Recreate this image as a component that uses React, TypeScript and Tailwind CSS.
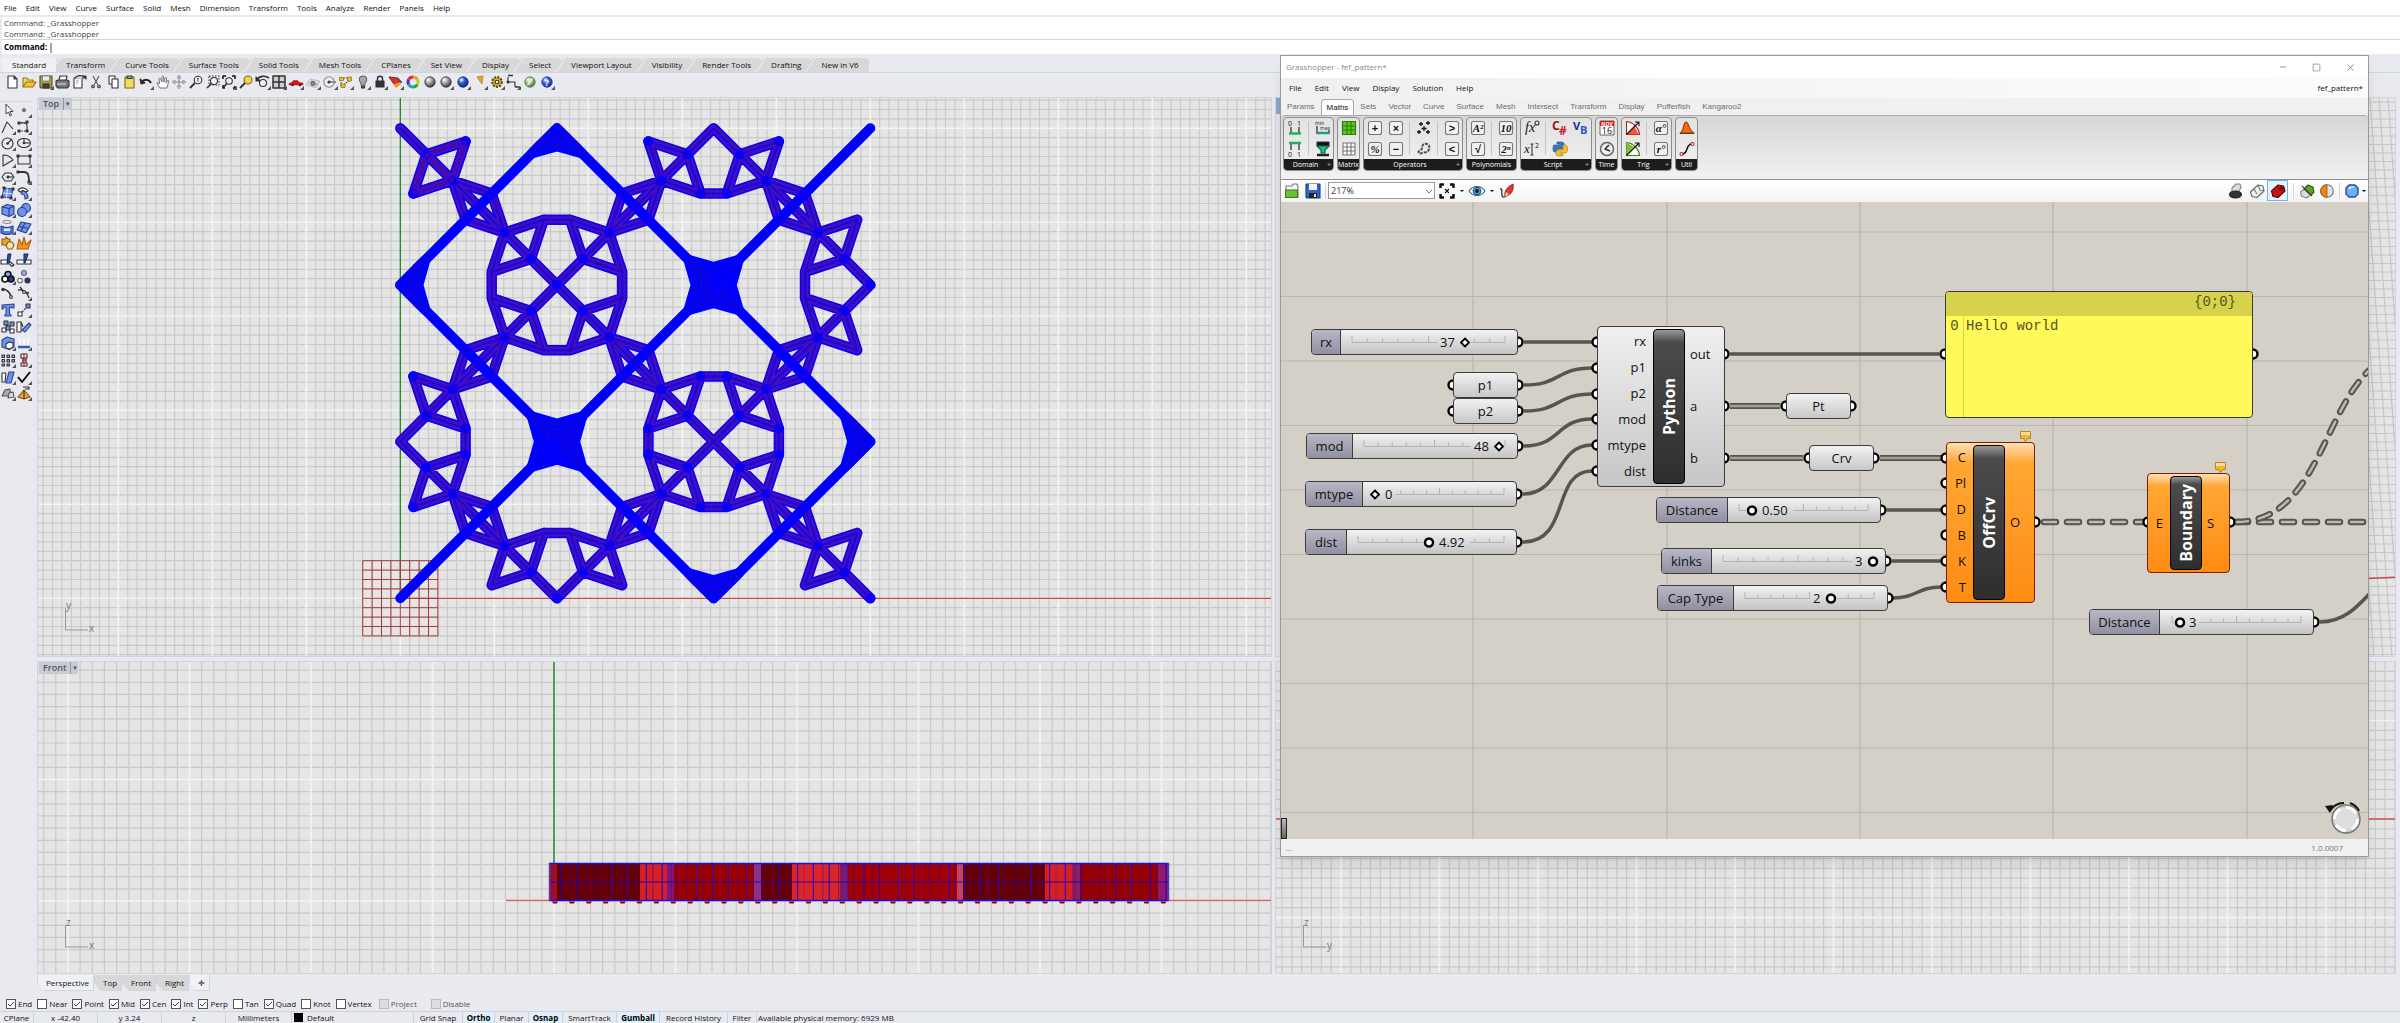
import type { ReactNode } from "react";
import { Minus, Square, X } from "lucide-react";

const INK = "#333";
const BLUE = "#6f92ea";

const menu = ["File", "Edit", "View", "Curve", "Surface", "Solid", "Mesh", "Dimension", "Transform", "Tools", "Analyze", "Render", "Panels", "Help"];
const toolTabs = ["Standard", "Transform", "Curve Tools", "Surface Tools", "Solid Tools", "Mesh Tools", "CPlanes", "Set View", "Display", "Select", "Viewport Layout", "Visibility", "Render Tools", "Drafting", "New in V6"];
const ghMenu = ["File", "Edit", "View", "Display", "Solution", "Help"];
const ghTabs = ["Params", "Maths", "Sets", "Vector", "Curve", "Surface", "Mesh", "Intersect", "Transform", "Display", "Pufferfish", "Kangaroo2"];

function Svg({ children, more }: { children: ReactNode; more?: boolean }) {
  return (
    <svg viewBox="0 0 16 16" className="size-4 shrink-0 overflow-visible" fill="none" stroke={INK} strokeWidth="1.1" strokeLinejoin="round" aria-hidden="true">
      {children}
      {more && <path d="M16 12v4h-4z" fill="#555" stroke="none" />}
    </svg>
  );
}

function Ball({ id, light, dark }: { id: string; light: string; dark: string }) {
  return (
    <>
      <radialGradient id={id} cx=".35" cy=".3" r=".75">
        <stop offset="0" stopColor="#fff" />
        <stop offset=".4" stopColor={light} />
        <stop offset="1" stopColor={dark} />
      </radialGradient>
      <circle cx="8" cy="8" r="5.2" fill={`url(#${id})`} stroke={dark} strokeWidth=".8" />
    </>
  );
}

const topIcons: { name: string; more?: boolean; art: ReactNode }[] = [
  { name: "New", art: <path d="M4 2h6l3 3v9H4zM10 2v3h3" fill="#fff" /> },
  { name: "Open", art: <><path d="M2 13V4h4l1 2h5v2" fill="#f7d96b" stroke="#9a7412" /><path d="M2 13l3-5h10l-3 5z" fill="#f2c12e" stroke="#9a7412" /></> },
  { name: "Save", more: true, art: <><path d="M2 2h12v12H3l-1-1z" fill="#a99f3b" stroke="#55501c" /><path d="M4.5 2h7v5h-7z" fill="#e9ecee" stroke="#666" strokeWidth=".6" /><path d="M5 10h6v4H5z" fill="#444" /></> },
  { name: "Print", art: <><path d="M5 6l1-4h7l-1 4" fill="#fff" /><path d="M2 7l2-1h9l2 1v5l-2 2H4l-2-2z" fill="#777" /><path d="M3 10h9" stroke="#ddd" /></> },
  { name: "Document properties", art: <><path d="M3 4h8v10H3z" fill="#fff" /><path d="M4 4c1-2 5-3 8-2v3" fill="#ddd" /><path d="M12 2h3v3z" fill={INK} /><path d="M5 7h3M5 9h2" stroke="#999" /></> },
  { name: "Cut", art: <><path d="M5 2l5 9M11 2L6 11" stroke="#555" /><circle cx="5" cy="12.5" r="1.3" /><circle cx="11" cy="12.5" r="1.3" /></> },
  { name: "Copy", art: <><path d="M4 2h6v8H4z" fill="#fff" /><path d="M7 5h6v9H7z" fill="#fff" /></> },
  { name: "Paste", art: <><path d="M4 3h9v11H4z" fill="#f3dc62" stroke="#7c6a1c" /><path d="M6 2h5v2.5H6z" fill="#aaa" /></> },
  { name: "Undo", more: true, art: <><path d="M4 8c2-3 7-3 9 1" strokeWidth="2" stroke="#222" /><path d="M2 5l1 5 4-1z" fill="#222" /></> },
  { name: "Pan", art: <path d="M5 14c-1-2-3-4-3-5s1.5-.5 2.5 1L4 5c0-1 1.500-1 1.800 0L7 8V3c0-1 1.500-1 1.600 0L9 8l1-4c.3-1 1.600-.8 1.500.3L11 9l1.500-2.500c.7-.6 1.500 0 1.200.7L12 14z" fill="#fff" stroke="#666" strokeWidth=".9" /> },
  { name: "Rotate view", art: <><path d="M8 2v12M2 8h12" stroke="#888" /><path d="M8 1l2 3H6zM8 15l2-3H6zM1 8l3-2v4zM15 8l-3-2v4z" fill="#ccc" stroke="#777" strokeWidth=".6" /></> },
  { name: "Zoom", art: <><circle cx="10" cy="6" r="3.8" fill="#f5f5f5" /><path d="M7 9l-5 5" strokeWidth="1.8" /><path d="M10 4v4M9 5l1-1 1 1" strokeWidth=".8" /></> },
  { name: "Zoom window", art: <><circle cx="9" cy="7" r="3.5" fill="#f5f5f5" /><path d="M6.5 9.5L2 14" strokeWidth="1.6" /><path d="M4 2h10v9H4z" strokeDasharray="1.5 1.5" /></> },
  { name: "Zoom extents", more: true, art: <><circle cx="8" cy="7" r="3.3" fill="#f5f5f5" /><path d="M6 9l-3 4" strokeWidth="1.6" /><path d="M2 5V2h3M11 2h3v3M2 11v3h2M12 14h2v-2" stroke="#111" strokeWidth="1.5" /></> },
  { name: "Zoom selected", art: <><circle cx="10" cy="6" r="4" fill="#f3d443" stroke="#7a6a22" /><path d="M7 9l-5 5" strokeWidth="1.8" /></> },
  { name: "Undo view", more: true, art: <><circle cx="8" cy="9" r="3.5" fill="#f5f5f5" /><path d="M2 6c2-4 8-5 12-2" strokeWidth="1.6" /><path d="M1 3v4h4z" fill={INK} /></> },
  { name: "Four viewports", more: true, art: <path d="M2 2h12v12H2zM8 2v12M2 8h12" fill="#cfcfcf" strokeWidth="1.5" /> },
  { name: "Named views", more: true, art: <><path d="M1 9.5l2.500-1L5.500 6.500h4l2 2 3.500.5v2H1z" fill="#d4191c" stroke="#b01013" strokeWidth=".5" /><circle cx="4.5" cy="11" r="1.2" fill="#222" stroke="none" /><circle cx="12" cy="11" r="1.2" fill="#222" stroke="none" /></> },
  { name: "CPlane", more: true, art: <><path d="M1 11l4-6 10 2-4 7z" fill="#ddd" stroke="#aaa" strokeWidth=".6" /><path d="M3 8l10 2.5M6 6l7 6" stroke="#999" strokeWidth=".6" /><circle cx="8" cy="9.5" r="2.2" fill="#888" stroke="#444" strokeWidth=".6" /></> },
  { name: "Object snap", more: true, art: <><circle cx="7" cy="8" r="5.2" stroke="#888" fill="#eee" /><path d="M7 8h7" stroke="#555" /><circle cx="7" cy="8" r="1" fill={INK} /></> },
  { name: "Select points", more: true, art: <><path d="M3 4h8M4 12l8-6M3 12V5" strokeDasharray="1.5 1" /><path d="M1.5 3.5h4v3h-4zM9.5 3h4v4h-4zM3 10h4v3.5H3z" fill="#f0bd27" stroke="#8a6a12" strokeWidth=".7" /></> },
  { name: "Hide", more: true, art: <><path d="M8 2c4 0 5 4 2 7v2H6V9C3 6 4 2 8 2z" fill="#a9a9a9" stroke="#666" /><path d="M6.5 12h3v2h-3z" fill="#555" /></> },
  { name: "Lock", more: true, art: <><path d="M5.5 7V4.5c0-3 5-3 5 0V7" strokeWidth="1.5" /><path d="M4 7h8v6H4z" fill="#333" /></> },
  { name: "Layers", more: true, art: <><path d="M1 3l9 1 4 4-6 5z" fill="#3a6ad2" stroke="#234" strokeWidth=".6" /><path d="M1 3l8 1 3 4-6 2z" fill="#e3301e" stroke="#7b150c" strokeWidth=".6" /><path d="M6 10l6-2 1 2-5 4z" fill="#f19b25" stroke="none" /></> },
  { name: "Properties", art: <g strokeWidth="3"><path d="M8 3a5 5 0 014.300 2.500" stroke="#f0a01c" /><path d="M12.3 5.5a5 5 0 010 5" stroke="#b7cf2c" /><path d="M12.3 10.5A5 5 0 018 13" stroke="#2fa84c" /><path d="M8 13a5 5 0 01-4.300-2.500" stroke="#26a6cf" /><path d="M3.7 10.5a5 5 0 010-5" stroke="#403ac2" /><path d="M3.7 5.5A5 5 0 018 3" stroke="#d52a5a" /></g> },
  { name: "Shade", art: <Ball id="b1" light="#aaa" dark="#333" /> },
  { name: "Rendered", more: true, art: <Ball id="b2" light="#aaa" dark="#333" /> },
  { name: "Render", more: true, art: <Ball id="b3" light="#2f5fd8" dark="#0b2080" /> },
  { name: "Spotlight", more: true, art: <path d="M5 3l6-1-1 8z" fill="#eda32c" stroke="#b77412" strokeWidth=".7" /> },
  { name: "Options", more: true, art: <><circle cx="8" cy="8" r="4.8" fill="#dfae35" stroke="#5f4a16" strokeWidth="2.2" strokeDasharray="2 1.2" /><circle cx="8" cy="8" r="1.8" fill="#eee" /></> },
  { name: "Dimension", more: true, art: <><path d="M3 3v5h7v5" /><path d="M3 1.5h5M10 13h5" strokeWidth="1.5" /><circle cx="3" cy="8" r="1" fill={INK} /></> },
  { name: "Grasshopper", art: <><Ball id="b4" light="#9dbf8c" dark="#4f7a42" /><path d="M5 12c1-5 3-7 6-8-1 4-2 6-6 8z" fill="#dceccf" stroke="none" /></> },
  { name: "Help", more: true, art: <><Ball id="b5" light="#3c62db" dark="#1c3399" /><text x="8" y="11.5" fontSize="9" fontWeight="700" textAnchor="middle" fill="#fff" stroke="none">?</text></> },
];

const sideIcons: { name: string; more?: boolean; art: ReactNode }[] = [
  { name: "Select", art: <path d="M6 2v10l2.500-2 1.500 4 1.500-.7L10 9.500h3z" fill="#fff" strokeWidth=".9" /> },
  { name: "Point", more: true, art: <circle cx="8" cy="8" r="1.3" /> },
  { name: "Polyline", more: true, art: <path d="M2 14L7 3l6 7" /> },
  { name: "Control point curve", more: true, art: <><path d="M3 4c10-1 8 2 8 8" /><path d="M3 4h8v-1M3 12h8" strokeDasharray="1.5 1" /><path d="M2 3h2v2H2zM10 2h2v2h-2zM2 11h2v2H2zM10 11h2v2h-2z" fill="#555" /></> },
  { name: "Circle", more: true, art: <><circle cx="7.5" cy="8.5" r="5.5" /><path d="M7.5 8.5L12 4" /><circle cx="7.5" cy="8.5" r=".8" fill={INK} /></> },
  { name: "Ellipse", more: true, art: <><ellipse cx="8" cy="8" rx="6.5" ry="4.5" /><path d="M8 3.5V8h6" /><circle cx="8" cy="8" r=".8" fill={INK} /></> },
  { name: "Arc", more: true, art: <path d="M3 3v11l10-6C11 5 7 3 3 3z" /> },
  { name: "Rectangle", more: true, art: <><path d="M2 4h12v8H2z" /><path d="M1 3h2v2H1zM13 3h2v2h-2z" fill="#555" /></> },
  { name: "Polygon", more: true, art: <><path d="M5 4h6l3 4-3 4H5L2 8z" /><path d="M8 8h5" /><circle cx="8" cy="8" r="1" fill={INK} /></> },
  { name: "Fillet", more: true, art: <><path d="M2 3h6c4 0 5 3 5 10" strokeWidth="1.8" /><path d="M1 2h2v2H1zM12 12h2v2h-2z" fill="#555" /></> },
  { name: "Surface from points", more: true, art: <><path d="M4 3l9 1-2 9-9-1z" fill={BLUE} stroke="#2b468f" /><path d="M7.5 3.5l-1 9M3 8l9 1" stroke="#dfe6ff" /><path d="M3 2h2v2H3zM12 3h2v2h-2zM10 12h2v2h-2zM1 11h2v2H1z" fill="#444" /></> },
  { name: "Revolve", more: true, art: <><path d="M2 5c3-3 7-3 10 1l-2 1C8 5 6 5 4 7z" fill="#fff" /><path d="M6 6c4 0 6 3 6 7l-3 1c0-4-1-5-4-5z" fill={BLUE} stroke="#2b468f" /></> },
  { name: "Box", more: true, art: <><path d="M2 5l5-2.500L14 4v8l-5 2.500L2 12z" fill={BLUE} stroke="#24408c" /><path d="M2 5l7 1.500L14 4M9 6.500v8" stroke="#24408c" /></> },
  { name: "Union", more: true, art: <><circle cx="10" cy="6" r="4.5" fill={BLUE} stroke="#24408c" /><circle cx="6" cy="10" r="4.5" fill={BLUE} stroke="#24408c" /></> },
  { name: "Extrude", more: true, art: <><ellipse cx="7" cy="3" rx="4" ry="1.5" stroke="#888" /><path d="M1 7c4 2 8 2 12 0v7c-4 2-8 2-12 0z" fill="#4d7be8" stroke="#24408c" /><path d="M4 9c2 .7 4 .7 6 0v3H4z" fill="#e6edff" stroke="none" /></> },
  { name: "Surface grid", more: true, art: <><path d="M5 3l10 2-5 9-9-3z" fill={BLUE} stroke="#24408c" /><path d="M9 4l-4 8M3 7.500l10 2" stroke="#24408c" /></> },
  { name: "Puzzle", art: <><path d="M2 4h3l1-2 2 2h2v4l-2 2H2z" fill="#f0a62a" stroke="#8a5a0c" /><path d="M8 7h4l2 3-2 4H8l-2-3z" fill="#f7e3b8" stroke="#8a5a0c" /></> },
  { name: "Explode", art: <path d="M1 14L3 4l3 6 2-8 2 8 5-5-3 9z" fill="#f39a16" stroke="#bd5a06" /> },
  { name: "Trim", art: <><path d="M1 8h7v4H1zM9 9l5 4-2 1.500-3-3" fill="#fff" /><path d="M8 2h3l-2 9H7z" fill="#2f4fae" stroke="#1c2e6c" /></> },
  { name: "Split", art: <><path d="M1 8h14v4H1z" fill="#fff" /><path d="M8 2h4l-3 9H8z" fill="#2f4fae" stroke="#1c2e6c" /></> },
  { name: "Group", more: true, art: <><circle cx="8" cy="5.5" r="3" fill="#8fa7ef" stroke="#111" strokeWidth="1.6" /><circle cx="5" cy="10" r="3" fill="#fff" stroke="#111" strokeWidth="1.6" /><circle cx="11" cy="10" r="3" fill="#2238a8" stroke="#111" strokeWidth="1.6" /></> },
  { name: "Ungroup", art: <><circle cx="8" cy="4" r="2.5" fill="#a3a9f4" stroke="#667" /><circle cx="4" cy="11.5" r="2.3" fill="#fff" stroke="#667" /><circle cx="11.5" cy="11.5" r="2.5" fill="#1f2fa0" /></> },
  { name: "Edit points", art: <><path d="M2 4c5 0 9 4 9 9" strokeWidth="1.6" /><circle cx="3" cy="4.5" r="1.2" fill={INK} /><circle cx="11" cy="12" r="1.4" fill="#fff" /></> },
  { name: "Control points", more: true, art: <><path d="M2 5c6-1 9 2 11 8M4 2l4 5 5 1" strokeWidth="1.3" /><circle cx="8" cy="7" r="1.4" fill="#fff" /></> },
  { name: "Text", art: <path d="M2 3l12-1v4h-2l-1-1H9.500v7l1.500 1v1H5v-1l1-1V5H4L3 7H2z" fill={BLUE} stroke="#2b468f" /> },
  { name: "Move", more: true, art: <><path d="M2 10h4v4H2z" fill="#fff" /><path d="M10 2h4v4h-4z" fill={BLUE} /><path d="M6 10l4-4" strokeDasharray="2 1" /></> },
  { name: "Copy objects", art: <><path d="M2 9h4v4H2zM10 10h4v4h-4z" fill="#fff" /><path d="M4 2h4v4H4zM10 3h4v4h-4zM6 7h4v4H6z" fill={BLUE} /></> },
  { name: "Rotate", art: <><path d="M1 3h4v10H1zM5 3l2 5" fill="#fff" /><path d="M13 4l2 2-6 7-3-2z" fill={BLUE} stroke="#2b468f" /></> },
  { name: "Check box", more: true, art: <><path d="M2 5l5-3 7 2v8l-5 2.500L2 12z" fill={BLUE} stroke="#2b468f" /><path d="M6 9l3-2 4 1v4l-3 2-4-1z" fill="#fff" /></> },
  { name: "Align", more: true, art: <><path d="M2 12h12" stroke="#3658c4" strokeWidth="2.5" /><path d="M4 3v7M8 3v7M12 3v7" stroke="#fff" strokeWidth="1.5" /></> },
  { name: "Array", more: true, art: <path d="M2 3h2.500v2.500H2zM7 3h2.500v2.500H7zM12 3h2.500v2.500H12zM2 7.500h2.500V10H2zM7 7.500h2.500V10H7zM12 7.500h2.500V10H12zM2 12h2.500v2H2zM7 12h2.500v2H7z" fill="#9fb4f0" /> },
  { name: "Analyze", more: true, art: <><path d="M5 2h6v4H5zM5 11h6v3H5zM7 6h3v5H7z" fill="#eee" /><path d="M8 1v14M6 8h5" stroke="#d4191c" /></> },
  { name: "Shear", more: true, art: <><path d="M2 4h4l-1 9H2z" fill="#fff" /><path d="M9 3h5l-3 11H6z" fill={BLUE} stroke="#2b468f" /></> },
  { name: "Check", more: true, art: <path d="M2 8l4 5 8-10" stroke="#111" strokeWidth="2" /> },
  { name: "Boolean", more: true, art: <><path d="M2 11l3-6 5-1 1 7z" fill="#aaa" stroke="#555" /><path d="M8 13l1-5 4-1 1 5z" fill="#ddd" stroke="#555" /></> },
  { name: "Cone", more: true, art: <><path d="M8 5l6 7-6 2-6-2z" fill="#eca32b" stroke="#7e5210" /><path d="M8 5v9M7 2h6v2H9" fill="#ddd" /></> },
];

// Grid lines through (ox, oy), every tenth line drawn light
function GridLines({ w, h, ox, oy, step }: { w: number; h: number; ox: number; oy: number; step: number }) {
  let minor = "";
  let major = "";
  for (let i = Math.ceil(-ox / step); ox + i * step < w; i++) {
    const seg = `M${(ox + i * step).toFixed(1)} 0V${h}`;
    if (i % 10 === 0) major += seg;
    else minor += seg;
  }
  for (let i = Math.ceil(-oy / step); oy + i * step < h; i++) {
    const seg = `M0 ${(oy + i * step).toFixed(1)}H${w}`;
    if (i % 10 === 0) major += seg;
    else minor += seg;
  }
  return (
    <>
      <path d={minor} stroke="#c9c9c9" strokeWidth="1.2" />
      <path d={major} stroke="#f3f3f3" strokeWidth="1.6" />
    </>
  );
}

const U = 470 / 36;
type Seg = [number, number, number, number];

const mirror = (v: number, i: number) => (i % 2 ? (i + 1) * 12 - v : i * 12 + v);

function buildPattern() {
  const purple: Seg[] = [];
  const solid: Seg[] = [];
  const nodes: [number, number][] = [];
  const petals = [
    [2, 2, 5, 1, 4, 4, 1, 5],
    [4, 4, 7, 5, 8, 8, 5, 7],
    [8, 8, 11, 7, 10, 10, 7, 11],
  ];
  for (let i = 0; i < 3; i++) {
    for (let j = 0; j < 3; j++) {
      const put = (list: Seg[], a: number, b: number, c: number, d: number) =>
        list.push([mirror(a, i), mirror(b, j), mirror(c, i), mirror(d, j)]);
      put(purple, 0, 0, 12, 12);
      put(solid, 12, 0, 0, 12);
      for (const p of petals) {
        for (let k = 0; k < 8; k += 2) put(purple, p[k], p[k + 1], p[(k + 2) % 8], p[(k + 3) % 8]);
      }
      const ties: Seg[] = [[1, 5, 0, 5], [5, 1, 5, 0], [11, 7, 12, 7], [7, 11, 7, 12]];
      for (const t of ties) {
        const x = mirror(t[2], i);
        const y = mirror(t[3], j);
        if (x > 0 && x < 36 && y > 0 && y < 36) put(purple, ...t);
      }
      for (const n of [2, 4, 8, 10, 12]) nodes.push([mirror(n, i), mirror(n, j)]);
      for (const n of [[5, 7], [7, 5], [6, 6], [5, 1], [1, 5]]) nodes.push([mirror(n[0], i), mirror(n[1], j)]);
    }
  }
  return { purple, solid, nodes };
}

const pattern = buildPattern();
const toPath = (list: Seg[]) => list.map(([a, b, c, d]) => `M${(a * U).toFixed(1)} ${(b * U).toFixed(1)}L${(c * U).toFixed(1)} ${(d * U).toFixed(1)}`).join("");
const stars: [number, number][] = [[12, 0], [0, 12], [24, 12], [12, 24], [36, 24], [24, 36]];
const starShape = [[-2.1, -2.1], [0, -1.5], [2.1, -2.1], [1.5, 0], [2.1, 2.1], [0, 1.5], [-2.1, 2.1], [-1.5, 0]];
const starPath = (x: number, y: number, k: number) => `M${starShape.map(([a, b]) => `${((x + a * k) * U).toFixed(1)} ${((y + b * k) * U).toFixed(1)}`).join("L")}Z`;

function StarPattern() {
  const purple = toPath(pattern.purple);
  const solid = toPath(pattern.solid);
  return (
    <g strokeLinecap="round" strokeLinejoin="round">
      <path d={purple} stroke="#1400f0" strokeWidth="10.5" />
      <path d={purple} stroke="#4310bb" strokeWidth="7" />
      <path d={purple} stroke="#2408dd" strokeWidth="2.5" />
      <path d={solid} stroke="#0000ff" strokeWidth="10" />
      <clipPath id="model"><rect x="-5" y="-5" width="480" height="480" rx="3" /></clipPath>
      <clipPath id="diamond"><path d={`M${12 * U} -7L${24 * U + 7} ${12 * U}L${36 * U + 7} ${24 * U}L${24 * U} ${36 * U + 7}L${12 * U} ${24 * U + 7}L-7 ${12 * U}Z`} /></clipPath>
      <g clipPath="url(#model)">
        {stars.map(([x, y]) => (
          <path key={`${x}-${y}`} d={starPath(x, y, 1)} fill="#0000ff" stroke="#0000ff" strokeWidth="7" clipPath={x % 36 && y % 36 ? undefined : "url(#diamond)"} />
        ))}
      </g>
      {pattern.nodes.map(([x, y], i) => <circle key={i} cx={x * U} cy={y * U} r="5" fill="#0a00fa" />)}
      <path d={purple + solid} stroke="#15009a" strokeWidth=".7" opacity=".45" strokeDasharray="9 3" />
      <g clipPath="url(#diamond)" stroke="#2c0a90" strokeWidth="1" strokeDasharray="3 2">
        {stars.map(([x, y]) => <path key={`${x}-${y}`} d={starPath(x, y, 0.35) + starPath(x, y, 0.6) + starPath(x, y, 0.85)} />)}
      </g>
      <path d={toPath([[2, 2, 5, 1], [5, 1, 4, 4], [4, 4, 1, 5], [1, 5, 2, 2], [2, 2, 4, 4]])} stroke="#8a0a68" strokeWidth="1.5" opacity=".6" />
    </g>
  );
}

function ViewTitle({ children }: { children: string }) {
  return (
    <button className="absolute -top-px left-px flex h-[13px] items-center bg-[#c7ccd4] pl-1 text-[9px] font-semibold leading-none text-[#4c5666]">
      {children}
      <span className="ml-1 flex h-full w-2 items-center justify-center border-l border-[#8c94a0] text-[6px]">▼</span>
    </button>
  );
}

function AxisMark({ up, side }: { up: string; side: string }) {
  return (
    <svg className="absolute bottom-4 left-6 h-11 w-11" fill="none" stroke="#999" aria-hidden="true">
      <path d="M3.500 12v22H26" />
      <text x="4" y="13" fontSize="10" fill="#777" stroke="none">{up}</text>
      <text x="27" y="36" fontSize="10" fill="#777" stroke="none">{side}</text>
    </svg>
  );
}

// x, width and colour of each face seen in the Front view
const faces: [number, number, string][] = [
  [0, 8, "#9c1030"], [8, 83, "#650006"], [91, 27, "#d42028"], [118, 7, "#7a1a80"], [125, 80, "#980002"], [205, 7, "#8a3090"],
  [212, 31, "#650006"], [243, 48, "#d8262c"], [291, 8, "#7a1a70"], [299, 109, "#a00006"], [408, 6, "#c04468"], [414, 82, "#650006"],
  [496, 27, "#d42028"], [523, 8, "#8a2060"], [531, 78, "#960002"], [609, 11, "#8d1a70"],
];

function FrontModel() {
  return (
    <g transform="translate(511 201)">
      {faces.map(([x, w, c]) => <rect key={x} x={x} width={w} height="38" fill={c} />)}
      {Array.from({ length: 74 }, (_, i) => (
        <path key={i} d={`M${(3 + i * 8.4 + (i % 3)).toFixed(1)} 0V38`} stroke={i % 2 ? "#1a00c8" : "#5c0060"} strokeWidth={i % 2 ? 1.2 : 0.7} opacity={i % 5 === 0 ? 0.4 : 0.8} />
      ))}
      <path d="M0 19H620" stroke="#30009c" strokeWidth="1.2" />
      <path d="M0 .5H620M0 37.500H620" stroke="#1c10e8" strokeWidth="1.5" />
      <path d="M.5 0V38M619.500 0V38" stroke="#5a3cb0" strokeWidth="1.5" />
      {Array.from({ length: 37 }, (_, i) => <path key={i} d={`M${(3 + i * 16.9).toFixed(1)} 38.500h6l-1 2h-4z`} fill="#8c0010" />)}
    </g>
  );
}

function Viewports() {
  const red = Array.from({ length: 9 }, (_, i) => `M${i * 9.4} 0V75.200M0 ${i * 9.4}H75.200`).join("");
  const persp = Array.from({ length: 16 }, (_, i) => `M${1058 + i * 9} 0L${1098 + i * 9} 560`).join("") + Array.from({ length: 66 }, (_, i) => `M1080 ${4 + i * 8.5}h50`).join("");
  return (
    <main className="grid min-w-0 flex-1 grid-cols-[1235fr_1121fr] grid-rows-[560fr_313fr] gap-x-[3px] gap-y-1 pr-1">
      <section className="relative min-h-0 overflow-hidden border border-[#d0d4de] bg-[#e5e5e5]" aria-label="Top view">
        <svg className="absolute inset-0 size-full" fill="none">
          <GridLines w={2400} h={900} ox={362.3} oy={500.3} step={9.4} />
          <path d="M362.300 500.300H2400" stroke="#c8474a" strokeWidth="1.2" />
          <path d="M362.300 0V500" stroke="#238a28" strokeWidth="1.4" />
          <g transform="translate(324.700 462.700)"><path d={red} stroke="#a83a3c" strokeWidth="1" /></g>
          <g transform="translate(362.300 30.300)"><StarPattern /></g>
        </svg>
        <ViewTitle>Top</ViewTitle>
        <AxisMark up="y" side="x" />
      </section>
      <section className="relative min-h-0 overflow-hidden border border-[#d0d4de] bg-[#e5e5e5]" aria-label="Perspective view">
        <svg className="absolute inset-0 size-full" fill="none">
          <path d={persp} stroke="#c6c6c6" strokeWidth="1.2" />
          <path d="M1080 481L1125 479" stroke="#c8474a" strokeWidth="1.4" />
        </svg>
        <div className="h-4 w-24 bg-[#8aa6cc]" />
      </section>
      <section className="relative min-h-0 overflow-hidden border border-[#d0d4de] bg-[#e5e5e5]" aria-label="Front view">
        <svg className="absolute inset-0 size-full" fill="none">
          <GridLines w={2400} h={600} ox={516} oy={239} step={12.15} />
          <path d="M468 238.500H2400" stroke="#c86a6c" strokeWidth="1.4" />
          <path d="M516 0V201" stroke="#2c8a30" strokeWidth="1.6" />
          <FrontModel />
        </svg>
        <ViewTitle>Front</ViewTitle>
        <AxisMark up="z" side="x" />
      </section>
      <section className="relative min-h-0 overflow-hidden border border-[#d0d4de] bg-[#e5e5e5]" aria-label="Right view">
        <svg className="absolute inset-0 size-full" fill="none">
          <GridLines w={2400} h={600} ox={65} oy={157} step={9.85} />
          <path d="M0 157H2400" stroke="#c8474a" strokeWidth="1.4" />
        </svg>
        <AxisMark up="z" side="y" />
      </section>
    </main>
  );
}

// Glyph inside a raised ribbon button
function Key({ children, italic }: { children: string; italic?: boolean }) {
  return (
    <>
      <rect x="1.5" y="1.5" width="13" height="13" rx="2" fill="#f2f2f2" stroke="#777" />
      <text x="8" y="12" fontSize="11" fontWeight="700" textAnchor="middle" fill="#111" stroke="none" fontStyle={italic ? "italic" : "normal"} fontFamily={italic ? "Liberation Serif" : "Liberation Sans"}>{children}</text>
    </>
  );
}

type Col = [ReactNode, ReactNode];
const groups: { name: string; plus?: boolean; cols: (Col | "|")[] }[] = [
  {
    name: "Domain", plus: true, cols: [
      [<><text x="1" y="6" fontSize="7" fill="#111" stroke="none">0</text><text x="10" y="6" fontSize="7" fill="#111" stroke="none">1</text><path d="M4 7v6M12 7v6" stroke="#111" /><path d="M2 13.500h12" stroke="#19b566" strokeWidth="2.5" /></>,
        <><text x="1" y="15.5" fontSize="7" fill="#111" stroke="none">0</text><text x="10" y="15.5" fontSize="7" fill="#111" stroke="none">1</text><path d="M4 2v7M12 2v7" stroke="#111" /><path d="M2 2h12" stroke="#19b566" strokeWidth="2.5" /></>],
      "|",
      [<><text x="0" y="5" fontSize="5" fill="#111" stroke="none">min</text><text x="5" y="10" fontSize="5" fill="#111" stroke="none">max</text><path d="M2 6v8M14 10v4" stroke="#111" /><path d="M2 13h12" stroke="#12a28c" strokeWidth="2.5" /></>,
        <><path d="M2 1h12v4H2z" fill="#111" /><path d="M2 5h12l-4 4v3H6V9z" fill="#19c07c" stroke="#0a6a44" /><path d="M2 14h12" stroke="#222" strokeWidth="2.5" /></>],
    ],
  },
  {
    name: "Matrix", cols: [
      [<path d="M1.500 1.500h13v13h-13zM6 1.500v13M10 1.500v13M1.500 6h13M1.500 10h13" fill="#62c41d" stroke="#2b7a0a" />,
        <path d="M2 2h12v12H2zM6 2v12M10 2v12M2 6h12M2 10h12" fill="#fafafa" stroke="#777" />],
    ],
  },
  {
    name: "Operators", plus: true, cols: [
      [<Key>+</Key>, <Key italic>%</Key>],
      [<Key>×</Key>, <Key>−</Key>],
      "|",
      [<path d="M5 2v4M3 4h4M12 1v4M10 3h4M8 6v5M5.500 8.500h5M3 10v4M1 12h4M12 10v4M10 12h4" stroke="#111" strokeWidth="1.3" />,
        <path d="M3 12c-2-3 3-2 3-5s2-5 5-4 3 5 1 7-6 1-8 3" stroke="#555" strokeWidth="2" strokeDasharray="3 1" />],
      "|",
      [<Key>&gt;</Key>, <Key>&lt;</Key>],
    ],
  },
  { name: "Polynomials", cols: [[<Key italic>A²</Key>, <Key>√</Key>], "|", [<Key italic>10</Key>, <Key italic>2ⁿ</Key>]] },
  {
    name: "Script", plus: true, cols: [
      [<><text x="1" y="12" fontSize="14" fontStyle="italic" fontFamily="Liberation Serif" fill="#111" stroke="none">fx</text><circle cx="13" cy="3" r="2" /></>,
        <><text x="0" y="12" fontSize="13" fontStyle="italic" fontFamily="Liberation Serif" fill="#111" stroke="none">x</text><path d="M8 3v11M6.500 3h3M6.500 14h3" /><text x="11" y="7" fontSize="7" fill="#111" stroke="none">2</text></>],
      "|",
      [<><text x="0" y="10" fontSize="12" fontWeight="700" fill="#a30f18" stroke="none">C</text><text x="7" y="15" fontSize="12" fontWeight="700" fill="#d0202c" stroke="none">#</text></>,
        <><path d="M5 1h5l2 1v6H6v3H2l-1-2V6l1-2h6V3H5z" fill="#3b78c2" stroke="#1f4c86" strokeWidth=".6" /><path d="M11 15H6l-2-1v-3l1-2h6V4h3l1.500 2v4L14 12H8v1h3z" fill="#f3c02c" stroke="#a87d0e" strokeWidth=".6" /></>],
      [<><text x="0" y="10" fontSize="11" fontWeight="700" fill="#1c2f8e" stroke="none">V</text><text x="7" y="14" fontSize="11" fontWeight="700" fill="#2a55c4" stroke="none">B</text></>, null],
    ],
  },
  {
    name: "Time", cols: [
      [<><path d="M1 1h14v14H1z" fill="#fff" stroke="#444" strokeWidth=".8" /><path d="M1 1h14v5H1z" fill="#e5141c" stroke="none" /><text x="8" y="5.5" fontSize="5" fontWeight="700" textAnchor="middle" fill="#fff" stroke="none">NOV</text><text x="8" y="14" fontSize="9" textAnchor="middle" fill="#111" stroke="none">16</text></>,
        <><circle cx="8" cy="8" r="6.5" fill="#eee" stroke="#666" strokeWidth="1.5" /><path d="M10 4L6 8l5 2" strokeWidth="1.6" /></>],
    ],
  },
  {
    name: "Trig", plus: true, cols: [
      [<><path d="M1.500 1.500v13h13C14 8 8 2 1.500 1.500z" fill="#fff" stroke="#b3201a" /><path d="M1.500 14.500L9 6l5 8.500z" fill="#ef5a3c" stroke="none" /><path d="M1.500 14.500L14 2M10 2h4v4" stroke="#111" /></>,
        <><path d="M1.500 1.500v13h13C14 8 8 2 1.500 1.500z" fill="#fff" stroke="#3f7d16" /><path d="M1.500 1.500v13L9 6z" fill="#7fc33a" stroke="none" /><path d="M1.500 14.500L14 2M10 2h4v4" stroke="#111" /></>],
      "|",
      [<Key italic>α°</Key>, <Key italic>r°</Key>],
    ],
  },
  {
    name: "Util", cols: [
      [<><path d="M1 13c4-1 3-11 6-11s3 9 8 11z" fill="#f06a12" stroke="#a33c05" /><path d="M1 13.500h14" stroke="#444" /></>,
        <><path d="M3 13c7 0 3-10 10-10" stroke="#111" strokeWidth="1.5" /><circle cx="2.5" cy="13" r="1.5" fill="#fff" stroke="#b22" /><circle cx="13.5" cy="3" r="1.5" fill="#fff" stroke="#b22" /></>],
    ],
  },
];

function Ribbon() {
  return (
    <div className="flex h-[64px] gap-[3px] rounded-t border-t border-[#aaa] bg-linear-to-b from-[#d6d6d6] to-[#f2f2f2] px-[2px] pt-px">
      {groups.map((g) => (
        <div key={g.name} className="flex h-[54px] flex-col overflow-hidden rounded border border-[#8c8c8c] bg-linear-to-b from-[#e2e2e2] to-[#f0f0f0]">
          <div className="flex flex-1">
            {g.cols.map((c, i) =>
              c === "|" ? (
                <div key={i} className="mx-[3px] my-1 w-px bg-[#c4c4c4]" />
              ) : (
                <div key={i} className="flex w-[21px] flex-col items-center justify-around">
                  {c.map((art, k) => art ? <button key={k} aria-label={`${g.name} ${i}-${k}`}><Svg>{art}</Svg></button> : <span key={k} className="size-4" />)}
                </div>
              ),
            )}
          </div>
          <div className="flex h-[11px] items-center justify-center bg-[#1c1c1c] text-[7px] leading-none text-white">
            <span className="flex-1 text-center">{g.name}</span>
            {g.plus && <span className="pr-0.5 text-[#bbb]">+</span>}
          </div>
        </div>
      ))}
    </div>
  );
}

function Drop({ className }: { className: string }) {
  return <svg viewBox="0 0 4 4" className={`size-1 ${className}`}><path d="M0 1h4L2 3z" fill="#111" /></svg>;
}

function GhToolbar() {
  return (
    <div className="flex h-[23px] items-center border-t border-[#8e8e8e] bg-linear-to-b from-white to-[#f3f3f3] pb-px pl-[2px]">
      <button aria-label="Open file" className="mx-[1px]"><Svg><path d="M2 3h6l1-2h4l1 3v10H2z" fill="#f4f4f4" stroke="#777" /><path d="M1.500 7h12v7.500h-12z" fill="#6cbf34" stroke="#3b7d14" /></Svg></button>
      <button aria-label="Save file" className="mx-[4px]"><Svg><path d="M1 1h14v14H2l-1-1z" fill="#2b66c9" stroke="#173f86" /><path d="M4 1h8v6H4z" fill="#f3f3f3" stroke="none" /><path d="M4 10h8v5H4z" fill="#222" stroke="none" /><path d="M9 11h2v3H9z" fill="#ddd" stroke="none" /></Svg></button>
      <span className="mr-[2px] h-4 w-px bg-[#d5d5d5]" />
      <label className="relative flex items-center">
        <span className="sr-only">Zoom</span>
        <select defaultValue="217%" className="h-[17px] w-[107px] appearance-none border border-[#999] bg-white pl-[2px] text-[9px] text-[#333]">
          <option>217%</option>
          <option>100%</option>
        </select>
        <svg viewBox="0 0 8 8" className="pointer-events-none absolute right-[2px] size-2" fill="none" stroke="#777"><path d="M1 3l3 3 3-3" /></svg>
      </label>
      <button aria-label="Zoom extents" className="ml-[4px]"><Svg><path d="M1.500 5V1.500H5M11 1.500h3.500V5M1.500 11v3.500H5M11 14.500h3.500V11" stroke="#111" strokeWidth="2.5" /><path d="M6 6l4 4M10 6l-4 4" stroke="#111" /></Svg></button>
      <Drop className="mx-[5px]" />
      <button aria-label="Preview"><Svg><path d="M0 8c4-6 12-6 16 0-4 6-12 6-16 0z" fill="#fff" stroke="#2b5d86" /><circle cx="8" cy="8" r="3.8" fill="#4aa3df" stroke="#144b78" /><circle cx="8" cy="8" r="1.6" fill="#111" /></Svg></button>
      <Drop className="mx-[5px]" />
      <button aria-label="Sketch"><Svg><path d="M1 6c4-1 0 7 3 8 2 1 3-2 5-3" strokeWidth="1.3" /><path d="M6 13c-1-5 2-9 8-12 1 5-1 10-6 12z" fill="#e2352b" stroke="#86150f" strokeWidth=".8" /><path d="M6 13l1-4 3 2-2 2z" fill="#f0c6a0" stroke="none" /></Svg></button>
      <div className="ml-auto flex items-center">
        <button aria-label="No preview" className="mr-[5px]"><Svg><path d="M4 9V5l4-4h4l1 4-3 4z" fill="#ddd" stroke="#888" /><ellipse cx="7.5" cy="11.5" rx="6" ry="3.5" fill="#333" stroke="#222" /></Svg></button>
        <button aria-label="Wireframe preview" className="mr-[2px]"><Svg><path d="M1.500 9L9 2l5 1 1 5-7 6.500-5-1z" stroke="#666" fill="#f2f2f2" /><path d="M5 6l3 5M9 2l2 5 4 1" stroke="#777" /></Svg></button>
        <button aria-label="Shaded preview" className="flex h-[21px] w-[21px] items-center justify-center border border-[#6db5ea] bg-[#e4f2fc]"><Svg><path d="M1.500 8L8 2l5.500 1L15 8l-7 6.500-5-1z" fill="#c41414" stroke="#5c0606" /><ellipse cx="11.5" cy="5.5" rx="3" ry="2" fill="#7c0a0a" stroke="none" /></Svg></button>
        <span className="mx-[5px] h-4 w-px bg-[#d5d5d5]" />
        <button aria-label="Preview selected" className="mr-[4px]"><Svg><path d="M1.500 9l4-3 6 6-4 3-5-2z" fill="#ddd" stroke="#888" /><path d="M5 6l4-4 5 2 1 5-3 3z" fill="#57a81e" stroke="#24570a" /><path d="M3 3l10 10" stroke="#444" /></Svg></button>
        <button aria-label="Preview quality"><Svg><circle cx="8" cy="8" r="6.3" fill="#e2e2e2" stroke="#777" /><path d="M8 1.700a6.300 6.300 0 000 12.600z" fill="#ea861c" stroke="#8a4306" strokeWidth=".7" /></Svg></button>
        <span className="mx-[4px] h-4 w-px bg-[#d5d5d5]" />
        <button aria-label="Preview mesh"><Svg><path d="M5 2h6l3 3v6l-3 3H5l-3-3V5z" fill="#6eb0ef" stroke="#254b9c" strokeWidth="1.4" /><path d="M5 6l2-2h3" stroke="#fff" /></Svg></button>
        <Drop className="mx-[2px]" />
      </div>
    </div>
  );
}

type SliderData = { id: string; label: string; value: string; x: number; y: number; w: number; lw: number; t0: number; t1: number; mark: number; tx: number; round?: boolean };

const sliders: SliderData[] = [
  { id: "rx", label: "rx", value: "37", x: 30, y: 127, w: 207, lw: 29, t0: 41, t1: 194, mark: 154, tx: 129 },
  { id: "mod", label: "mod", value: "48", x: 25, y: 231, w: 212, lw: 46, t0: 58, t1: 199, mark: 193, tx: 168 },
  { id: "mtype", label: "mtype", value: "0", x: 24, y: 279, w: 212, lw: 57, t0: 70, t1: 199, mark: 70, tx: 80 },
  { id: "dist", label: "dist", value: "4.92", x: 24, y: 327, w: 212, lw: 41, t0: 53, t1: 199, mark: 124, tx: 134, round: true },
  { id: "offset", label: "Distance", value: "0.50", x: 375, y: 295, w: 225, lw: 71, t0: 83, t1: 212, mark: 96, tx: 106, round: true },
  { id: "kinks", label: "kinks", value: "3", x: 380, y: 346, w: 225, lw: 50, t0: 62, t1: 212, mark: 212, tx: 194, round: true },
  { id: "cap", label: "Cap Type", value: "2", x: 376, y: 383, w: 231, lw: 76, t0: 88, t1: 217, mark: 174, tx: 156, round: true },
  { id: "extrude", label: "Distance", value: "3", x: 808, y: 407, w: 225, lw: 70, t0: 83, t1: 212, mark: 91, tx: 100, round: true },
];

const params = [
  { label: "p1", x: 172, y: 170 },
  { label: "p2", x: 172, y: 196 },
  { label: "Pt", x: 505, y: 191 },
  { label: "Crv", x: 528, y: 243 },
];

function NumberSlider({ s }: { s: SliderData }) {
  const step = (s.t1 - s.t0) / 10;
  // no ticks under the handle and the digits
  const lo = Math.min(s.tx - 3, s.mark - 6);
  const hi = Math.max(s.tx + s.value.length * 7 + 3, s.mark + 6);
  let d = "";
  if (lo > s.t0) d += `M${s.t0} 13.500H${lo}`;
  if (hi < s.t1) d += `M${hi} 13.500H${s.t1}`;
  for (let i = 0; i <= 10; i++) {
    const x = s.t0 + i * step;
    if (x > lo && x < hi) continue;
    d += `M${x.toFixed(1)} ${i % 5 === 0 ? 7 : 9.5}V13.500`;
  }
  return (
    <div className="absolute flex h-[26px] overflow-hidden rounded border border-[#3c3c3c] bg-linear-to-b from-[#f2f2f2] to-[#c4c4c4] text-[13px] leading-none" style={{ left: s.x, top: s.y, width: s.w }}>
      <label htmlFor={s.id} className="flex shrink-0 items-center justify-center border-r border-[#3c3c3c] bg-linear-to-b from-[#b9b8c6] to-[#918fa1]" style={{ width: s.lw }}>{s.label}</label>
      <svg className="absolute -left-px -top-px h-[26px] w-full" fill="none">
        <path d={d} stroke="#b2b2b2" />
        {s.round ? <circle cx={s.mark} cy="13.5" r="4" fill="#fff" stroke="#000" strokeWidth="2.5" /> : <path d={`M${s.mark} 9.500l4 4-4 4-4-4z`} fill="#fff" stroke="#000" strokeWidth="1.8" />}
      </svg>
      <span className="absolute top-[6px]" style={{ left: s.tx - 1 }}>{s.value}</span>
      <input id={s.id} type="range" className="min-w-0 flex-1 opacity-0" />
    </div>
  );
}

function Component({ name, ins, outs, warn, className, inW, coreW }: { name: string; ins: string[]; outs: string[]; warn?: boolean; className: string; inW: string; coreW: string }) {
  return (
    <div className={`absolute flex rounded border py-[2px] text-[13px] leading-none ${warn ? "border-[#7a1e0e] bg-linear-to-b from-[#ffe0b0] from-0% via-[#ffa733] via-12% to-[#ff8c12]" : "border-[#3c3c3c] bg-linear-to-b from-[#efefef] to-[#c6c6c6]"} ${className}`}>
      <div className={`flex flex-col ${inW}`}>
        {ins.map((t) => <span key={t} className="flex flex-1 items-center justify-end pr-[7px]">{t}</span>)}
      </div>
      <div className={`flex shrink-0 items-center justify-center rounded border border-black bg-linear-to-b from-[#9a9a9a] from-0% via-[#4b4b4b] via-8% to-[#2e2e2e] ${coreW}`}>
        <span className="rotate-180 text-[16px] font-bold text-white [writing-mode:vertical-rl]">{name}</span>
      </div>
      <div className="flex flex-1 flex-col pl-[5px]">
        {outs.map((t) => <span key={t} className="flex flex-1 items-center">{t}</span>)}
      </div>
    </div>
  );
}

const wires = [
  "M243 140H312",
  "M243 183C280 183 275 166 311 166",
  "M243 209C280 209 275 192 311 192",
  "M243 244C280 244 275 217 311 217",
  "M242 292C280 292 275 243 311 243",
  "M242 340C290 340 270 269 311 269",
  "M449 152H658",
  "M606 308H660",
  "M611 359H660",
  "M612 396C636 396 636 385 660 385",
  "M1039 420C1064 420 1078 403 1092 388",
];
const doubleWires = ["M449 204H499", "M449 256H522", "M599 256H660"];
const treeWires = ["M763 320H862", "M955 320H1100", "M955 320C1055 320 1040 150 1134 150"];

const grips: [number, number][] = [
  [237, 140], [172, 183], [237, 183], [172, 209], [237, 209], [237, 244], [236, 292], [236, 340],
  [316, 140], [316, 166], [316, 192], [316, 217], [316, 243], [316, 269],
  [443, 152], [443, 204], [443, 256], [505, 204], [570, 204], [528, 256], [593, 256],
  [664, 152], [972, 152], [600, 308], [605, 359], [607, 396],
  [665, 256], [665, 281], [665, 308], [665, 333], [665, 359], [665, 385],
  [754, 320], [867, 320], [949, 320], [1033, 420],
];

function Canvas() {
  const lines = [192, 386, 579, 772, 966].map((x) => `M${x} 0V1200`).join("") + Array.from({ length: 10 }, (_, i) => `M0 ${30 + i * 64.5}H2400`).join("");
  return (
    <div className="relative min-h-0 flex-1 overflow-hidden bg-[#d4d0c8] text-[#111]">
      <svg className="absolute inset-0 size-full" fill="none">
        <path d={lines} stroke="#b9b6ae" strokeWidth="1.2" />
        {wires.map((d) => <path key={d} d={d} stroke="#555551" strokeWidth="3.5" />)}
        {doubleWires.map((d) => <g key={d}><path d={d} stroke="#555551" strokeWidth="6" /><path d={d} stroke="#a0a296" strokeWidth="2.5" /></g>)}
        {treeWires.map((d) => (
          <g key={d} strokeLinecap="round" strokeDasharray="12 11">
            <path d={d} stroke="#555551" strokeWidth="6.5" />
            <path d={d} stroke="#bcb9b1" strokeWidth="2.5" />
          </g>
        ))}
        {grips.map(([x, y]) => <circle key={`${x}-${y}`} cx={x} cy={y} r="4.5" fill="#fff" stroke="#000" strokeWidth="2.4" />)}
      </svg>
      {sliders.map((s) => <NumberSlider key={s.id} s={s} />)}
      {params.map((p) => (
        <div key={p.label} className="absolute flex h-[26px] w-[65px] items-center justify-center rounded border border-[#3c3c3c] bg-linear-to-b from-[#f2f2f2] to-[#c8c8c8] text-[13px] leading-none" style={{ left: p.x, top: p.y }}>{p.label}</div>
      ))}
      <Component name="Python" ins={["rx", "p1", "p2", "mod", "mtype", "dist"]} outs={["out", "a", "b"]} className="left-[316px] top-[124px] h-[161px] w-[128px]" inW="w-[55px]" coreW="w-[32px]" />
      <Component name="OffCrv" warn ins={["C", "Pl", "D", "B", "K", "T"]} outs={["O"]} className="left-[665px] top-[240px] h-[161px] w-[89px]" inW="w-[26px]" coreW="w-[32px]" />
      <Component name="Boundary" warn ins={["E"]} outs={["S"]} className="left-[866px] top-[271px] h-[100px] w-[83px]" inW="w-[22px]" coreW="w-[32px]" />
      <div className="absolute left-[664px] top-[89px] h-[127px] w-[308px] overflow-hidden rounded border border-[#3c3c3c] bg-[#fff95a] font-['Liberation_Mono',monospace] text-[14px] leading-none text-[#55541f]">
        <div className="flex h-[24px] items-center justify-end bg-[#d6d24c] pb-1 pr-[16px]">{"{0;0}"}</div>
        <div className="flex h-[102px]">
          <span className="w-[18px] border-r border-[#d8d347] pt-[3px] text-center">0</span>
          <span className="pl-[2px] pt-[3px]">Hello world</span>
        </div>
      </div>
      {[[739, 229], [934, 260]].map(([x, y]) => (
        <svg key={x} className="absolute h-3 w-3" style={{ left: x, top: y }}><path d="M.5 .5h10v7h-3l-2 3-2-3h-3z" fill="#f7b71c" stroke="#b9842a" /><path d="M1 1h9v3H1z" fill="#ffe08a" /></svg>
      ))}
      <div className="absolute bottom-0 left-0 h-[21px] w-[6px] border border-[#222] bg-linear-to-b from-[#bbb] to-[#666]" />
      <svg viewBox="0 0 40 36" className="absolute bottom-[3px] right-[4px] h-9 w-10" fill="none" aria-hidden="true">
        <path d="M6 11A16 16 0 0120 3M26 3a16 16 0 019 8" stroke="#111" strokeWidth="2" />
        <path d="M1 6l8-1-3 8z" fill="#111" />
        <circle cx="22" cy="19" r="14" fill="#ccc" stroke="#777" strokeWidth="1.5" />
        <circle cx="22" cy="19" r="11.5" fill="#dedede" stroke="#fff" strokeWidth="3" strokeDasharray="12 6" />
      </svg>
    </div>
  );
}

function GrasshopperWindow() {
  return (
    <section className="absolute bottom-[166px] left-[1280px] right-[31px] top-[55px] flex flex-col border border-[#9a9a9a] bg-[#f0f0f0] shadow-lg" aria-label="Grasshopper">
      <header className="flex h-[22px] items-center bg-white pl-[5px] text-[#8a8a8a]">
        <span>Grasshopper - fef_pattern*</span>
        <div className="ml-auto flex items-center gap-[24px] pr-[12px]">
          <button aria-label="Minimize"><Minus size={10} /></button>
          <button aria-label="Maximize"><Square size={9} /></button>
          <button aria-label="Close"><X size={11} /></button>
        </div>
      </header>
      <nav className="flex h-[20px] items-center gap-[13px] bg-linear-to-r from-[#f0f0f0] to-[#fcfcfc] pl-2 pr-[5px]">
        {ghMenu.map((m) => <button key={m}>{m}</button>)}
        <span className="ml-auto">fef_pattern*</span>
      </nav>
      <div className="flex h-[17px] items-end font-['Liberation_Sans',sans-serif] text-[8px] text-[#6c6c6c]">
        {ghTabs.map((t) => (
          <button key={t} className={t === "Maths" ? "h-4 rounded-t border border-b-0 border-[#aaa] bg-white px-[5px] text-[#111]" : "h-4 px-[6px]"}>{t}</button>
        ))}
      </div>
      <Ribbon />
      <GhToolbar />
      <Canvas />
      <footer className="flex h-[17px] items-center justify-between pl-[5px] pr-[25px] text-[#777]">
        <span>...</span>
        <span>1.0.0007</span>
      </footer>
    </section>
  );
}

const snaps: [string, boolean][] = [["End", true], ["Near", false], ["Point", true], ["Mid", true], ["Cen", true], ["Int", true], ["Perp", true], ["Tan", false], ["Quad", true], ["Knot", false], ["Vertex", false], ["Project", false], ["Disable", false]];

function StatusArea() {
  const pane = "flex h-full items-center justify-center border-r border-[#cdd1dc]";
  return (
    <footer className="shrink-0">
      <div className="flex h-[18px] items-start pl-[37px] pt-px">
        {["Perspective", "Top", "Front", "Right", "✛"].map((t, i) => (
          <button key={t} className={`h-4 border border-t-0 border-[#cfd6e2] pl-[8px] pr-[4px] pt-px [clip-path:polygon(0_0,100%_0,100%_100%,7px_100%,0_50%)] ${i > 0 && i < 4 ? "bg-[#d8d8d8]" : "bg-[#f0f1f4]"}`}>{t}</button>
        ))}
      </div>
      <div className="flex h-[19px] items-center gap-[5px] pl-[6px] pt-1">
        {snaps.map(([name, on]) => {
          const off = name === "Project" || name === "Disable";
          return (
            <label key={name} className={`flex items-center gap-[2px] ${off ? "pl-[2px] pr-[7px] text-[#555]" : ""}`}>
              <input type="checkbox" defaultChecked={on} disabled={off} className="size-[10px] appearance-none border border-[#555] bg-white disabled:border-[#bbb] disabled:bg-[#ddd]" />
              {on && <svg viewBox="0 0 10 10" className="pointer-events-none -ml-[12px] size-[10px]" fill="none" stroke="#333"><path d="M2 5l2 2 4-4" /></svg>}
              {name}
            </label>
          );
        })}
      </div>
      <div className="flex h-3 items-stretch border-t border-[#cdd1dc] leading-[11px]">
        <span className={`${pane} w-[34px]`}>CPlane</span>
        <span className={`${pane} w-[64px]`}>x -42.40</span>
        <span className={`${pane} w-[64px]`}>y 3.24</span>
        <span className={`${pane} w-[64px]`}>z</span>
        <span className={`${pane} w-[66px]`}>Millimeters</span>
        <span className="flex w-[122px] items-center gap-1 border-r border-[#cdd1dc] pl-[2px]"><i className="size-[9px] bg-black" />Default</span>
        <button className={`${pane} w-[49px]`}>Grid Snap</button>
        <button className={`${pane} w-[32px] bg-[#e0f0fa] font-bold text-black`}>Ortho</button>
        <button className={`${pane} w-[34px]`}>Planar</button>
        <button className={`${pane} w-[34px] bg-[#e0f0fa] font-bold text-black`}>Osnap</button>
        <button className={`${pane} w-[54px]`}>SmartTrack</button>
        <button className={`${pane} w-[43px] bg-[#e0f0fa] font-bold text-black`}>Gumball</button>
        <button className={`${pane} w-[68px]`}>Record History</button>
        <button className={`${pane} w-[29px]`}>Filter</button>
        <span className="flex items-center pl-px">Available physical memory: 6929 MB</span>
      </div>
    </footer>
  );
}

export default function App() {
  return (
    <div className="relative flex h-screen flex-col overflow-hidden bg-[#e9eaef] font-['Open_Sans',sans-serif] text-[8px] leading-[12px] text-[#111]">
      <nav className="flex h-[15px] shrink-0 items-center gap-[9px] bg-white pl-[4px]">
        {menu.map((m) => <button key={m}>{m}</button>)}
      </nav>
      <div className="mt-[2px] shrink-0 pl-[2px]">
        <div className="h-[22px] bg-white pl-[2px] leading-[11px] text-[#444]">
          <p>Command: _Grasshopper</p>
          <p>Command: _Grasshopper</p>
        </div>
        <label className="flex h-[15px] items-center border-t border-[#cfd6e2] bg-white pl-[2px] font-bold text-black">
          Command:
          <input defaultValue="|" className="flex-1 pl-px text-[10px] font-normal outline-none" />
        </label>
      </div>
      <div className="mt-[4px] flex h-[15px] shrink-0 items-stretch border-b border-[#cfd6e2] pl-[2px]">
        {toolTabs.map((t, i) => (
          <button key={t} className={`relative px-[10px] ${i === 0 ? "bg-[#f0f1f4]" : "rounded-t bg-[#d8d8d8]"}`}>
            {i > 0 && <span className="absolute -left-px top-0 h-full w-px -skew-x-[35deg] bg-[#eef0f5]" />}
            {t}
          </button>
        ))}
      </div>
      <div className="ml-[4px] grid h-[24px] w-[551px] shrink-0 grid-cols-[repeat(33,1fr)] pt-px">
        {topIcons.map((t) => <button key={t.name} aria-label={t.name} className="flex h-4 justify-center"><Svg more={t.more}>{t.art}</Svg></button>)}
      </div>
      <div className="flex min-h-0 flex-1">
        <aside className="w-[37px] shrink-0 pr-[5px] pt-1">
          <div className="grid h-[301px] grid-cols-2 grid-rows-[repeat(18,1fr)] border-t border-[#d5d8e2]">
            {sideIcons.map((t) => <button key={t.name} aria-label={t.name} className="flex h-4 justify-center"><Svg more={t.more}>{t.art}</Svg></button>)}
          </div>
        </aside>
        <Viewports />
      </div>
      <StatusArea />
      <GrasshopperWindow />
    </div>
  );
}
